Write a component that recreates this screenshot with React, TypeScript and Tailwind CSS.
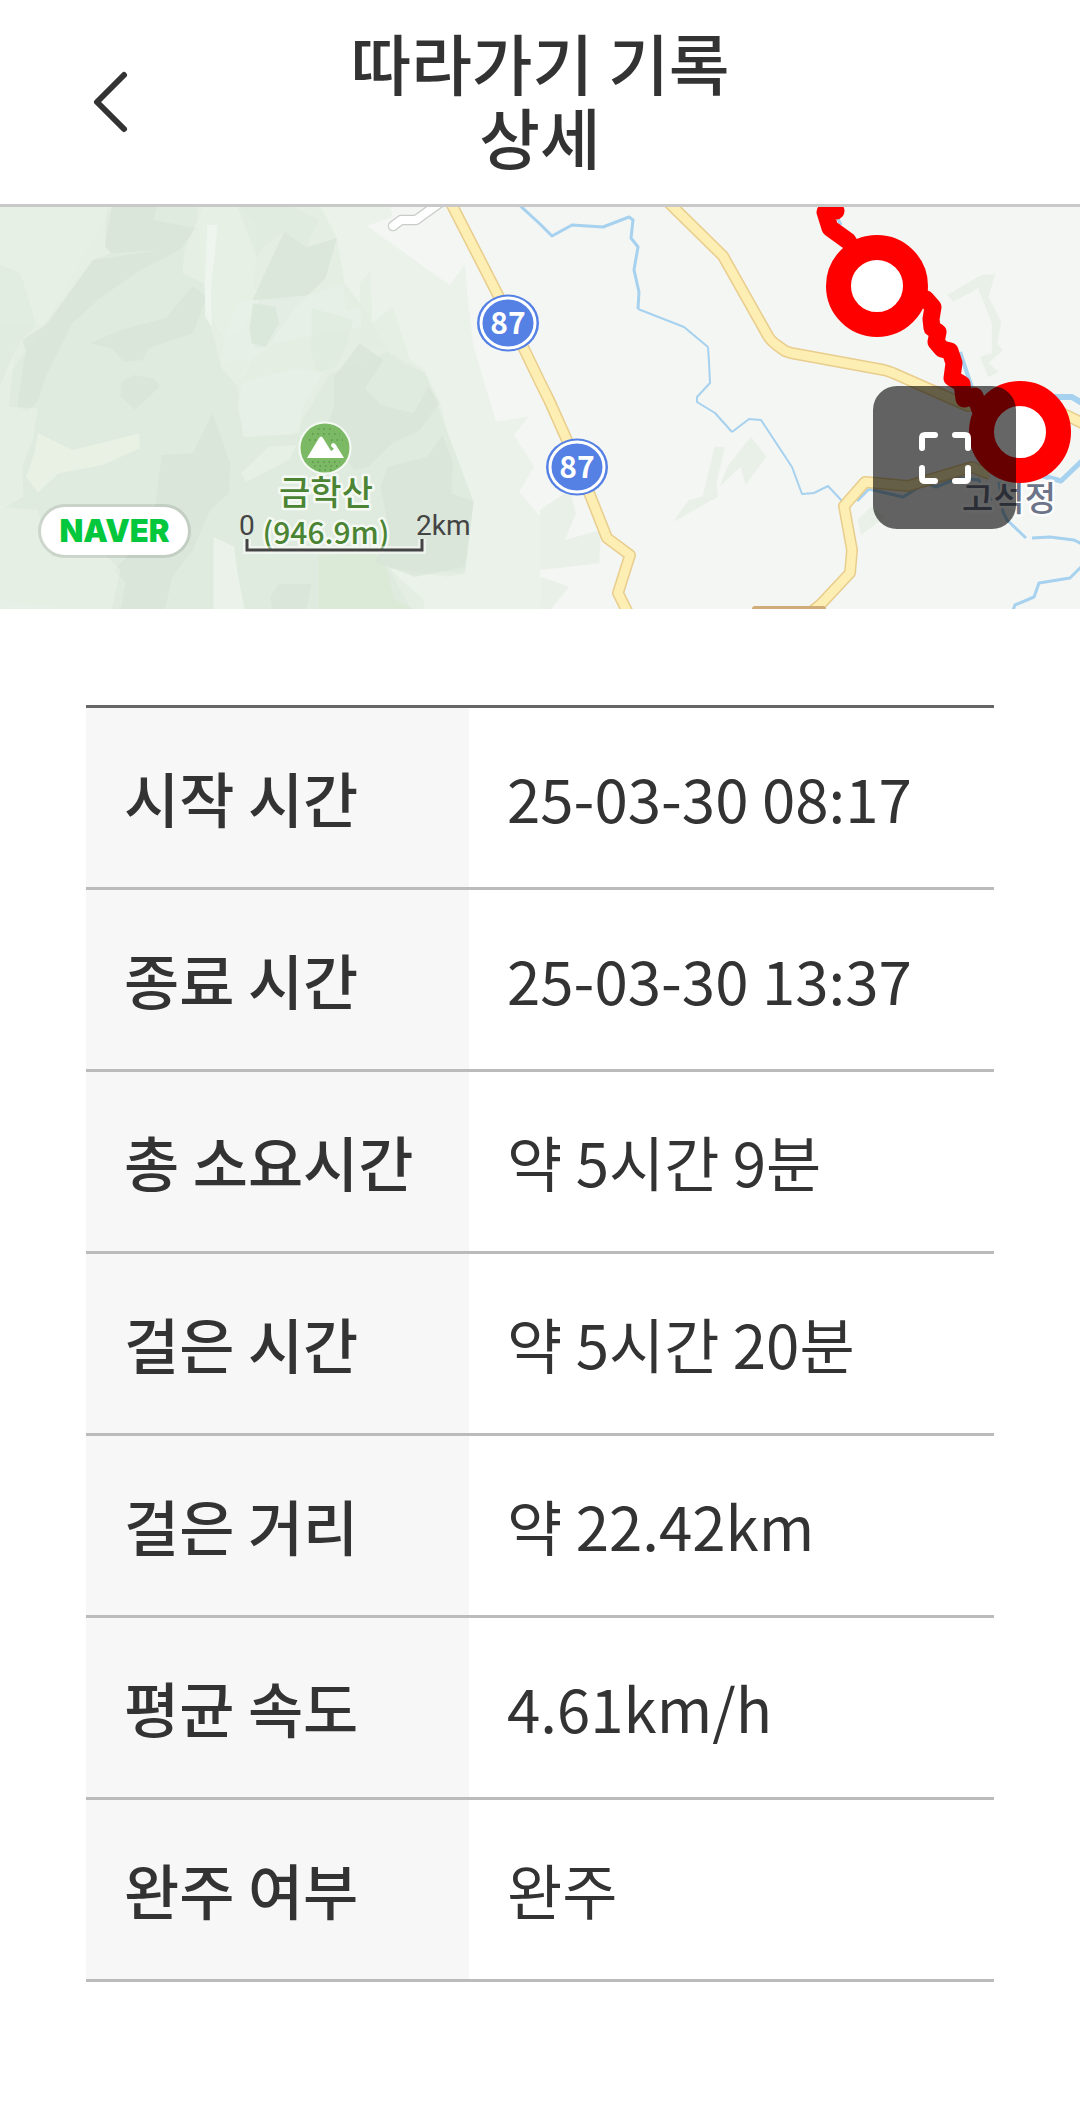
import React from 'react';

type Row = { label: string; value: string };
type Point = { x: number; y: number };

const rows: Row[] = [
  { label: '시작 시간', value: '25-03-30 08:17' },
  { label: '종료 시간', value: '25-03-30 13:37' },
  { label: '총 소요시간', value: '약 5시간 9분' },
  { label: '걸은 시간', value: '약 5시간 20분' },
  { label: '걸은 거리', value: '약 22.42km' },
  { label: '평균 속도', value: '4.61km/h' },
  { label: '완주 여부', value: '완주' },
];

const roads = [
  'M449 199L453 207L498 295L540 382L549 400L566 438L590 495L607 538L630 555L618 593L630 617',
  'M664 198L723 256L768 336Q771 341 778 346L785 351L791 353L884 370Q888 371 893 373L968 406L1030 400L1068 416L1090 427',
  'M990 474L984 472L972 467L908 486L865 482L844 506L852 550L850 573L820 605L810 613',
];

const streams = [
  { d: 'M515 201L540 224L552 236L572 225L603 227L629 217L633 220L631 238L638 247L634 270L639 292L638 309', width: 3 },
  { d: 'M638 309L684 327L708 347', width: 2 },
  { d: 'M708 347L709 362L710 383L697 397L697 402L715 413L732 432', width: 2 },
  { d: 'M732 432L749 419L761 420L792 467L802 494L814 493L828 486L842 501', width: 2 },
  { d: 'M857 501L869 489L903 497L926 483L936 487L958 478L979 480L984 493L992 500', width: 3 },
  { d: 'M999 482L1003 512L1007 520L1026 538', width: 3 },
  { d: 'M1032 538L1050 537L1074 540L1084 545', width: 3 },
  { d: 'M1011 615L1015 605L1034 597L1039 583L1070 578L1084 564', width: 3 },
  { d: 'M1040 475L1061 481L1084 459', width: 5 },
  { d: 'M1050 397L1072 397L1084 404', width: 6 },
  { d: 'M960 352L972 388', width: 4 },
  { d: 'M836 215L841 225', width: 3 },
];

// wide green areas that lie under the relief
const land = [
  { fill: '#eaf2e9', d: 'M0 0H1130L1140 50L1065 78L1210 185L1305 255L1350 195L1358 300L1375 440L1440 665L1535 650L1492 705L1550 800L1507 875L1568 950V1240H0Z' },
  { fill: '#e4eee3', d: 'M0 0H920L978 115L1000 250L1053 320L1125 455L1180 490L1235 520L1275 600L1300 700L1315 870L1375 905L1350 1120L1300 1130L1130 1105L1230 1200V1240H0Z' },
  { fill: '#e0ebdf', d: 'M0 560L130 375L325 20H570L600 340L640 490L720 480L690 560L705 710L850 705L960 520L1125 455L1235 520L1300 700L1375 905L1350 1120L1130 1105L1200 1240H330L0 1200Z' },
];

// relief shading
const relief = [
  { fill: '#e7f1e6', d: 'M0 20H310L305 140L325 160L270 180L130 375H0Z' },
  { fill: '#dcebdc', d: 'M0 195L60 220L105 375L60 420L45 450L0 560Z' },
  { fill: '#d6e2d6', d: 'M325 20H455L445 60L570 85L520 150L400 215L290 295L210 370L135 525L110 600L80 635L50 620L75 450L65 420L140 370L270 180L465 150L325 160L305 140Z' },
  { fill: '#d6e2d6', d: 'M560 258L600 290L560 400L430 445L415 480L360 487L325 445L262 430L350 390L480 355Z' },
  { fill: '#d6e2d6', d: 'M352 545L390 525L445 535L465 558L393 630L350 590Z' },
  { fill: '#d6e2d6', d: 'M617 640L668 790L665 880L610 930L560 1050L500 1130L480 1227H350L365 1150L330 1110L440 1000L470 765L560 760Z' },
  { fill: '#e7f1e6', d: 'M590 20H690L740 65L745 170L735 260L760 285L700 390L650 415L600 330L590 250L530 220L535 150Z' },
  { fill: '#f3f9f3', d: 'M602 75H632L612 270L615 380L595 350V250Z' },
  { fill: '#dcebdc', d: 'M690 20H850L925 60L890 140L825 95L770 135L745 170Z' },
  { fill: '#d6e2d6', d: 'M825 95L890 142L978 115L945 235L865 315L815 382L780 440L740 445L725 385L750 300L733 300Z' },
  { fill: '#e8f1e7', d: 'M690 305L900 285L995 250L1005 330L1053 320L1050 380L800 430L740 470L690 560L640 500L650 415Z' },
  { fill: '#d3e2d5', d: 'M735 310L800 320L810 370L770 440L730 430L725 380Z' },
  { fill: '#d6e2d6', d: 'M1045 430L1113 480L1060 565L1105 615L1200 640L1245 560L1275 610L1220 690L1140 730L1070 800L1030 810L940 700L970 620V530Z' },
  { fill: '#dcebdc', d: 'M905 325L1025 360L1005 440L975 500L920 520L905 460Z' },
  { fill: '#e2ede1', d: 'M1045 250L1075 215L1080 370L1140 320L1190 480L1240 515L1180 500L1125 455L1050 425Z' },
  { fill: '#e8f2e7', d: 'M705 545L860 505L940 515L880 620L870 700L710 712L690 620Z' },
  { fill: '#d6e2d6', d: 'M1125 800L1240 770L1285 705L1315 790L1310 880L1375 905L1350 1100L1205 1130L1090 1085L1130 990L1105 860Z' },
  { fill: '#e8f2e7', d: 'M0 920L110 930L150 1070L300 1060L350 1110L325 1227H0Z' },
  { fill: '#ecf5e8', d: 'M110 700L210 750L405 700V745L300 795L170 820L110 878L75 830L100 760Z' },
  { fill: '#e8f1e7', d: 'M0 560L45 450L25 620L110 625L95 720L65 800L68 890L0 930Z' },
  { fill: '#eaf4e9', d: 'M700 820L780 740L860 735L840 780L715 845Z' },
  { fill: '#f0f7f0', d: 'M620 1010L680 1040L690 1120L710 1227H620Z' },
  { fill: '#d6e2d6', d: 'M810 1152H905L890 1227H790L785 1190Z' },
  { fill: '#d7e8d2', d: 'M925 1065L1090 1060L1120 1100L1145 1200L1200 1227H925Z' },
  { fill: '#e2ecdf', d: 'M2105 740L2080 850L2085 890L1955 965L2000 900L2040 890L2075 740Z' },
  { fill: '#e2ecdf', d: 'M2112 800L2180 710L2225 770L2165 855L2150 800L2090 860Z' },
  { fill: '#e2ecdf', d: 'M1568 930L1655 870L1672 940L1640 1020L1745 990L1740 1090L1568 1110Z' },
  { fill: '#e2ecdf', d: 'M2490 960L2530 920L2570 950L2500 1005Z' },
  { fill: '#e2ecdf', d: 'M1570 1130L1652 1160L1600 1227H1568Z' },
  { fill: '#e2ecdf', d: 'M2750 285L2850 225L2890 222L2870 290L2907 365L2895 430L2912 450L2870 490L2900 515L2870 532L2845 470L2880 460L2880 370L2840 265L2768 305Z' },
];

const shields: Point[] = [
  { x: 508, y: 323 },
  { x: 577, y: 467 },
];

const waypoints: Point[] = [
  { x: 877, y: 286 },
  { x: 1020, y: 432 },
];

const Shield = ({ x, y }: Point) => (
  <g>
    <ellipse cx={x} cy={y} rx="31" ry="28.5" fill="#5580e4" />
    <ellipse cx={x} cy={y} rx="27" ry="25" fill="#5580e4" stroke="#fff" strokeWidth="3" />
    <text x={x} y={y + 11} textAnchor="middle" fill="#fff" className="text-[30px] font-bold">87</text>
  </g>
);

const Waypoint = ({ x, y }: Point) => (
  <circle cx={x} cy={y} r="38.5" fill="#fff" stroke="#f00" strokeWidth="25" />
);

const MountainIcon = () => (
  <g>
    <circle cx="325" cy="448" r="26.5" fill="#f6faf5" />
    <circle cx="325" cy="448" r="24.5" fill="#7cb965" />
    <path
      d="M318 429h16M312 434h28M309 440h10M331 440h12M317 424h0M312 462h28M314 466h24M319 470h14"
      stroke="#5a944a"
      strokeWidth="1.5"
      strokeDasharray="1.5 4"
    />
    <path d="M307 458L319 438Q321 435 323 438L331 451L334 449L331 446Q331 443 334 443L336 445L344 458Z" fill="#fff" />
  </g>
);

const MapCanvas = () => (
  <svg viewBox="0 207 1080 402" preserveAspectRatio="xMidYMid slice" className="block w-full h-full">
    <rect y="207" width="1080" height="402" fill="#f3f6f3" />
    <g transform="translate(0 200) scale(0.3444 0.3333)">
      {land.map((l) => <path key={l.d} d={l.d} fill={l.fill} />)}
      {relief.map((r) => <path key={r.d} d={r.d} fill={r.fill} fillOpacity="0.6" />)}
    </g>

    <g fill="none" stroke="#a6d1ef" strokeLinejoin="round">
      {streams.map((s) => <path key={s.d} d={s.d} strokeWidth={s.width} />)}
    </g>

    {/* minor road */}
    <g fill="none" strokeLinecap="round" strokeLinejoin="round">
      <path d="M393 226L401 220L416 220L448 197" stroke="#c9cbc9" strokeWidth="10.5" />
      <path d="M393 226L401 220L416 220L448 197" stroke="#fff" strokeWidth="8" />
    </g>

    <g fill="none" strokeLinejoin="round">
      {roads.map((d) => <path key={d} d={d} stroke="#e9cd8c" strokeWidth="12" />)}
      {roads.map((d) => <path key={d} d={d} stroke="#fdeeb3" strokeWidth="9" />)}
    </g>
    <rect x="752" y="606" width="74" height="10" rx="3" fill="#d0ac78" />

    {shields.map((s) => <Shield key={s.y} {...s} />)}
    <MountainIcon />

    <g textAnchor="middle" strokeLinejoin="round" strokeWidth="5" className="font-medium [paint-order:stroke]">
      <text x="326" y="505" fill="#4b8433" stroke="#f4f9f3" className="text-[34px]">금학산</text>
      <text x="326" y="544" fill="#4b8433" stroke="#f4f9f3" className="text-[30px]">(946.9m)</text>
      <text x="1009" y="511" fill="#6c7489" stroke="#fbfcfb" className="text-[34px]">고석정</text>
    </g>

    {/* walked route */}
    <path
      d="M836 211L825 212L830 228L848 241L877 286L926 299L933 307L931 319L932 328L938 332L936 342L942 349L950 351L954 363L952 378L962 384L964 399L975 396L980 410L1020 432"
      fill="none"
      stroke="#f00"
      strokeWidth="17"
      strokeLinecap="round"
      strokeLinejoin="round"
    />
    {waypoints.map((w) => <Waypoint key={w.x} {...w} />)}

    {/* scale bar */}
    <path d="M247 539V550H422V539" fill="none" stroke="#fff" strokeOpacity="0.5" strokeWidth="8" />
    <path d="M247 539V550H422V539" fill="none" stroke="#444" strokeWidth="3" />
    <g fill="#444" className="font-[Roboto,sans-serif] text-[28px]">
      <text x="239" y="535">0</text>
      <text x="416" y="535">2km</text>
    </g>
  </svg>
);

const Header = () => (
  <header className="grid grid-cols-[1fr_440px_1fr] items-center border-b-3 border-[#c9c9c9] pt-6 pb-8">
    <button type="button" aria-label="뒤로" className="mt-2 ml-[78px] w-15">
      <svg viewBox="0 0 60 72" fill="none" stroke="#333" strokeWidth="6" strokeLinecap="round" strokeLinejoin="round">
        <path d="M46 9L19 36L46 63" />
      </svg>
    </button>
    <h1 className="text-center text-[66px] leading-[74px] font-medium break-keep">따라가기 기록 상세</h1>
  </header>
);

export default function App() {
  return (
    <div className="min-h-screen bg-white text-[#333] font-['Noto_Sans_CJK_KR',sans-serif]">
      <Header />

      <section className="relative h-[402px] overflow-hidden">
        <MapCanvas />
        <a
          href="#naver"
          className="absolute left-[38px] bottom-[51px] flex h-[54px] w-[153px] items-center justify-center rounded-full border-3 border-black/10 bg-white bg-clip-padding font-[Inter,sans-serif] text-[31px] font-black text-[#03c73c]"
        >
          NAVER
        </a>
        <button
          type="button"
          aria-label="지도 크게 보기"
          className="absolute right-16 bottom-20 flex size-[143px] items-center justify-center rounded-3xl bg-black/60"
        >
          <svg viewBox="0 0 52 52" fill="none" stroke="#fff" strokeWidth="6" strokeLinecap="round" strokeLinejoin="round" className="size-13">
            <path d="M3 16V6Q3 3 6 3H16M36 3H46Q49 3 49 6V16M49 36V46Q49 49 46 49H36M16 49H6Q3 49 3 46V36" />
          </svg>
        </button>
      </section>

      <main className="px-[86px] pt-24 pb-32">
        <table className="w-full table-fixed border-collapse border-t-3 border-[#666] text-[60px] leading-[89px]">
          <tbody>
            {rows.map((row) => (
              <tr key={row.label} className="border-b-3 border-[#bbb]">
                <th scope="row" className="w-[383px] bg-[#f7f7f7] pt-11 pb-[46px] pl-[38px] text-left font-medium whitespace-nowrap">
                  {row.label}
                </th>
                <td className="pt-11 pb-[46px] pl-[38px]">{row.value}</td>
              </tr>
            ))}
          </tbody>
        </table>
      </main>
    </div>
  );
}
